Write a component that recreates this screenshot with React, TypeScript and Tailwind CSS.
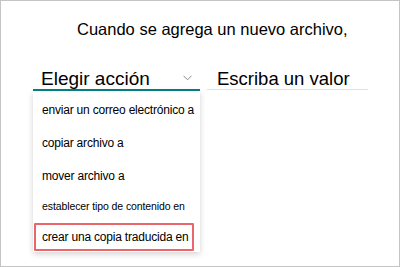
import React from 'react';

const actions = [
  { label: 'enviar un correo electrónico a', cls: 'h-[33px] text-[12px] tracking-[-0.2px]' },
  { label: 'copiar archivo a', cls: 'h-[33px] text-[12px] tracking-[-0.2px]' },
  { label: 'mover archivo a', cls: 'h-[33px] text-[12px] tracking-[-0.2px]' },
  { label: 'establecer tipo de contenido en', cls: 'h-[30px] text-[10.5px] tracking-[-0.1px]' },
];

export default function App() {
  return (
    <div className="w-[400px] h-[267px] bg-white">
      <div className="w-[400px] h-[267px] border border-[#c4c4c4] bg-white font-['Liberation_Sans',Arial,sans-serif] text-black">
        {/* Trigger sentence */}
        <div className="pt-[18px] pl-[76px] text-[16.5px] leading-[20px]">Cuando se agrega un nuevo archivo,</div>

        <div className="flex gap-[7px] pl-[32px] pt-[28px]">
          {/* Action picker */}
          <div className="w-[167px] flex flex-col">
            <div className="flex items-end justify-between h-[24px] pl-[8px] pr-[8px] border-b-2 border-[#038387]">
              <span className="text-[19px] leading-[21px]">Elegir acción</span>
              <svg width="9" height="6" viewBox="0 0 9 6" className="mb-[8px]">
                <path d="M0.5 0.8 L4.5 4.8 L8.5 0.8" fill="none" stroke="#8a8a8a" strokeWidth="1" />
              </svg>
            </div>
            <div className="bg-white shadow-[0_2px_6px_rgba(0,0,0,0.18)] pt-[2px] pb-[1px]">
              {actions.map((a) => (
                <div key={a.label} className={`flex items-center pl-[9px] whitespace-nowrap ${a.cls}`}>
                  {a.label}
                </div>
              ))}
              <div className="h-[28px] mt-[1px] ml-[1px] mr-[6px] pl-[6px] flex items-center whitespace-nowrap border-2 border-[#e8676a] rounded-[1px] text-[12px] tracking-[-0.2px]">
                crear una copia traducida en
              </div>
            </div>
          </div>

          {/* Value input */}
          <div className="w-[161px] h-[23px] flex items-end pl-[10px] border-b border-[#e1e1e1] self-start">
            <span className="text-[18.5px] leading-[21px]">Escriba un valor</span>
          </div>
        </div>
      </div>
    </div>
  );
}
